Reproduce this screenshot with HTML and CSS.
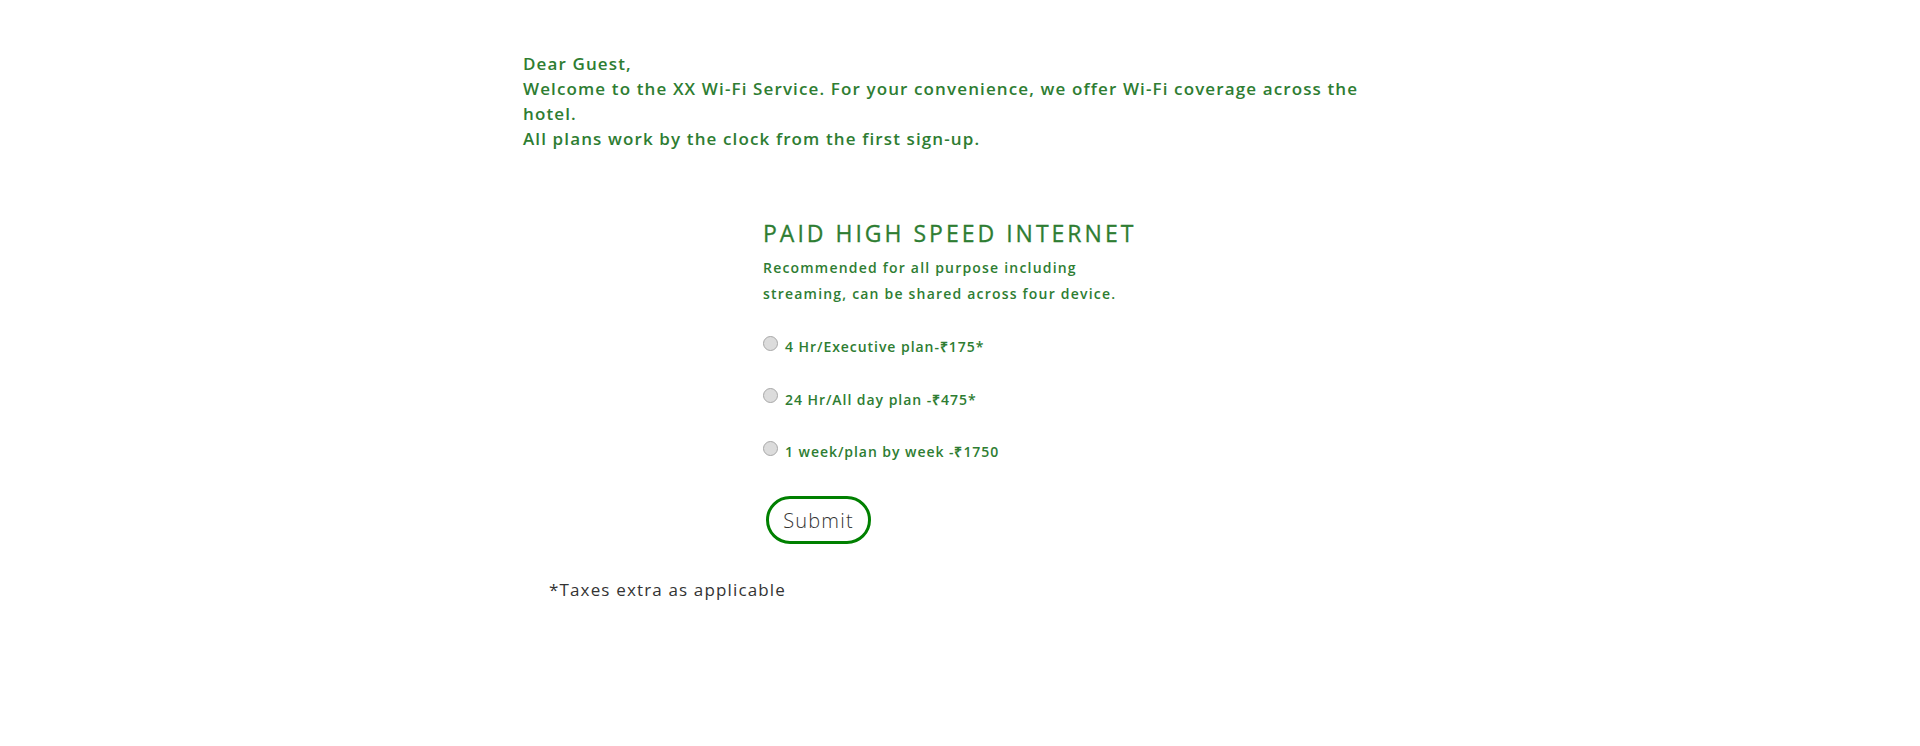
FILE: index.html
```html
<!DOCTYPE html>
<html lang="en">
<head>
<meta charset="utf-8">
<title>Wi-Fi Service</title>
<link rel="stylesheet" href="styles.css">
</head>
<body>
<main class="page">
  <section class="intro">
    <p>Dear Guest,<br>Welcome to the XX Wi-Fi Service. For your convenience, we offer Wi-Fi coverage across the hotel.<br>All plans work by the clock from the first sign-up.</p>
  </section>
  <form class="plans">
    <div class="card">
      <h2 class="title">PAID HIGH SPEED INTERNET</h2>
      <p class="desc">Recommended for all purpose including<br>streaming, can be shared across four device.</p>
      <label class="opt"><input type="radio" name="plan" class="radio"><span>4 Hr/Executive plan-₹175*</span></label>
      <label class="opt"><input type="radio" name="plan" class="radio"><span>24 Hr/All day plan -₹475*</span></label>
      <label class="opt"><input type="radio" name="plan" class="radio"><span>1 week/plan by week -₹1750</span></label>
      <button type="button" class="submit">Submit</button>
    </div>
  </form>
  <p class="note">*Taxes extra as applicable</p>
</main>
</body>
</html>
```
FILE: styles.css
```css
html, body {
  margin: 0;
  padding: 0;
  background: #ffffff;
}
body {
  font-family: "Open Sans", "Liberation Sans", sans-serif;
  color: #2e7d32;
}
.page {
  width: 874px;
  margin: 0 auto;
  padding-top: 51px;
}
.intro {
  max-width: 850px;
}
.intro p {
  margin: 0;
  font-size: 17px;
  font-weight: 600;
  line-height: 25px;
  letter-spacing: 1.12px;
}
.plans {
  display: flex;
  justify-content: center;
  margin-top: 68px;
}
.card {
  width: 394px;
  display: flex;
  flex-direction: column;
  align-items: flex-start;
}
.title {
  margin: 0;
  font-size: 23px;
  font-weight: 500;
  line-height: 28px;
  letter-spacing: 3px;
  -webkit-text-stroke: 0.3px #2e7d32;
}
.desc {
  margin: 8px 0 0;
  font-size: 14px;
  font-weight: 600;
  line-height: 26px;
  letter-spacing: 1.2px;
}
.opt {
  display: flex;
  align-items: center;
  gap: 7px;
  height: 52.5px;
  font-size: 14px;
  font-weight: 600;
  letter-spacing: 0.95px;
}
.opt:first-of-type {
  margin-top: 11.5px;
}
.opt span {
  margin-top: 4px;
}
.radio {
  appearance: none;
  -webkit-appearance: none;
  width: 15px;
  height: 15px;
  margin: 0;
  border-radius: 50%;
  border: 1px solid #a8a8a8;
  background: #dcdcdc;
  box-sizing: border-box;
  margin-top: -3px;
}
.submit {
  margin: 20px 0 0 3px;
  width: 105px;
  height: 48px;
  border: 3.5px solid #008000;
  border-radius: 25px;
  background: #ffffff;
  color: #333333;
  font-family: "Open Sans", "Liberation Sans", sans-serif;
  font-size: 20px;
  font-weight: 300;
  letter-spacing: 1.2px;
  padding: 0;
}
.note {
  margin: 33px 0 0 26px;
  font-size: 17px;
  font-weight: 400;
  color: #333333;
  letter-spacing: 1.15px;
  line-height: 25px;
}
```
